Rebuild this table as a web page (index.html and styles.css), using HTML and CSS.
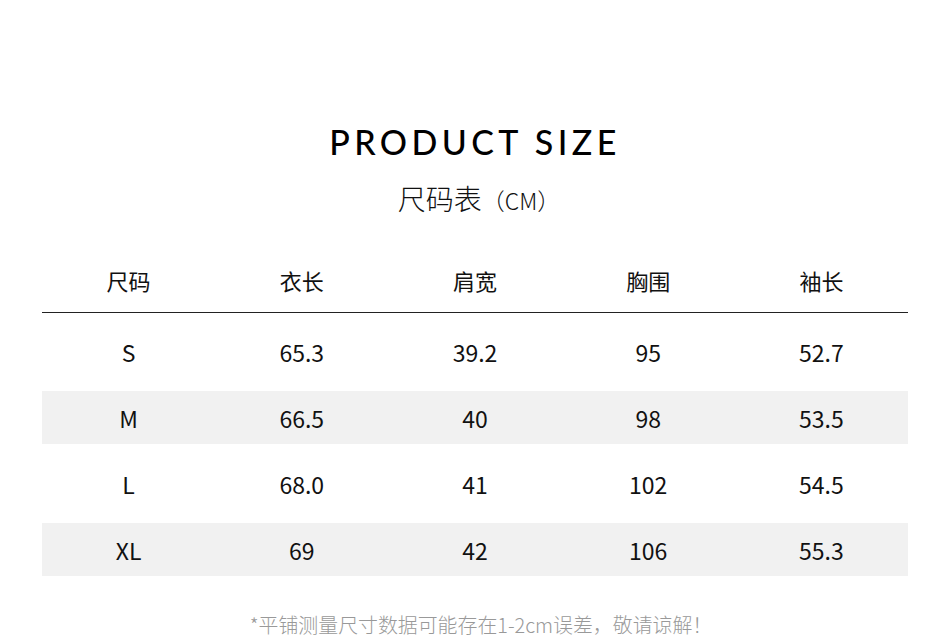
FILE: index.html
```html
<!DOCTYPE html>
<html lang="zh">
<head>
<meta charset="utf-8">
<link rel="stylesheet" href="styles.css">
</head>
<body>
<div class="page">
  <h1 class="title">PRODUCT SIZE</h1>
  <div class="subtitle">尺码表<span class="unit">（CM）</span></div>
  <div class="table">
    <div class="head">
      <div>尺码</div><div>衣长</div><div>肩宽</div><div>胸围</div><div>袖长</div>
    </div>
    <div class="rows">
      <div class="row"><div>S</div><div>65.3</div><div>39.2</div><div>95</div><div>52.7</div></div>
      <div class="row alt"><div>M</div><div>66.5</div><div>40</div><div>98</div><div>53.5</div></div>
      <div class="row"><div>L</div><div>68.0</div><div>41</div><div>102</div><div>54.5</div></div>
      <div class="row alt"><div>XL</div><div>69</div><div>42</div><div>106</div><div>55.3</div></div>
    </div>
  </div>
  <p class="note">*平铺测量尺寸数据可能存在1-2cm误差，敬请谅解！</p>
</div>
</body>
</html>
```

FILE: styles.css
```css
* { box-sizing: border-box; }
html, body { margin: 0; padding: 0; background: #fff; }
body {
  font-family: "Noto Sans CJK SC", "Noto Sans", sans-serif;
  color: #111;
}
.page {
  width: 950px;
  height: 636px;
  overflow: hidden;
  padding-top: 122px;
}
.title {
  margin: 0;
  text-align: center;
  font-family: "Lato", "Noto Sans", sans-serif;
  font-weight: 500;
  font-size: 34px;
  line-height: 40px;
  letter-spacing: 4.4px;
  color: #000;
}
.subtitle {
  margin-top: 16px;
  padding-left: 8px;
  text-align: center;
  font-size: 28px;
  line-height: 40px;
  font-weight: 300;
  color: #111;
}
.unit { font-size: 23px; }
.table {
  margin: 36px 42px 0;
}
.head, .row {
  display: grid;
  grid-template-columns: repeat(5, 1fr);
  text-align: center;
  align-items: center;
}
.head {
  height: 57px;
  font-size: 22px;
  border-bottom: 1px solid #222;
  padding-bottom: 8px;
}
.rows {
  display: flex;
  flex-direction: column;
  gap: 13px;
  padding-top: 12px;
}
.row {
  height: 53px;
  font-size: 23px;
  font-weight: 400;
}
.row.alt { background: #f1f1f1; }
.note {
  margin: 39px 0 0;
  padding-left: 12px;
  text-align: center;
  font-size: 19.9px;
  line-height: 20px;
  color: #999;
  font-weight: 300;
}
```
